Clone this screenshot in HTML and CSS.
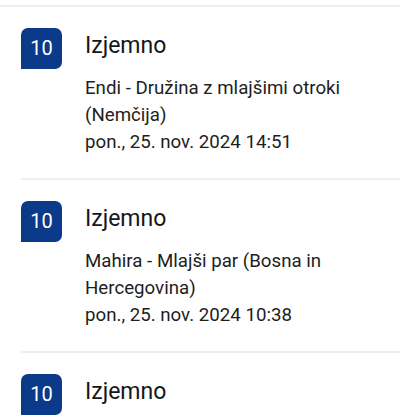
FILE: index.html
```html
<!DOCTYPE html>
<html lang="sl">
  <head>
    <meta charset="UTF-8" />
    <meta name="viewport" content="width=device-width, initial-scale=1.0" />
    <title>Ocene</title>
    <link rel="stylesheet" href="styles.css">
  </head>
  <body>
    <div class="divider"></div>
    <ul class="reviews">
      <li class="review">
        <div class="score">10</div>
        <div class="info">
          <h2>Izjemno</h2>
          <p>Endi - Družina z mlajšimi otroki (Nemčija)</p>
          <p>pon., 25. nov. 2024 14:51</p>
        </div>
      </li>
      <li class="review">
        <div class="score">10</div>
        <div class="info">
          <h2>Izjemno</h2>
          <p>Mahira - Mlajši par (Bosna in Hercegovina)</p>
          <p>pon., 25. nov. 2024 10:38</p>
        </div>
      </li>
      <li class="review">
        <div class="score">10</div>
        <div class="info">
          <h2>Izjemno</h2>
        </div>
      </li>
    </ul>
  </body>
</html>
```

FILE: styles.css
```css
* {
  box-sizing: border-box;
}
body {
  margin: 0;
  background-color: #ffffff;
  font-family: Roboto, "Noto Sans", sans-serif;
  color: #161616;
  overflow: hidden;
}
.divider {
  height: 2px;
  margin: 5px 20px 0 0;
  background-color: #eeeeee;
}
.reviews {
  list-style: none;
  margin: 0;
  padding: 0;
}
.review {
  display: flex;
  gap: 23px;
  margin-right: 20px;
  margin-left: 21px;
  padding: 21px 0 22px;
  border-bottom: 2px solid #eeeeee;
}
.score {
  flex: none;
  width: 41px;
  height: 41px;
  border-radius: 7px 7px 7px 0;
  background-color: #0b3a8a;
  color: #ffffff;
  font-size: 20px;
  line-height: 41px;
  text-align: center;
}
.info {
  flex: 1;
}
.info h2 {
  margin: 0 0 11px;
  font-size: 23px;
  font-weight: 400;
  line-height: 36px;
}
.info p {
  margin: 0;
  font-size: 18.7px;
  line-height: 27px;
  color: #1e1e1e;
}
```
